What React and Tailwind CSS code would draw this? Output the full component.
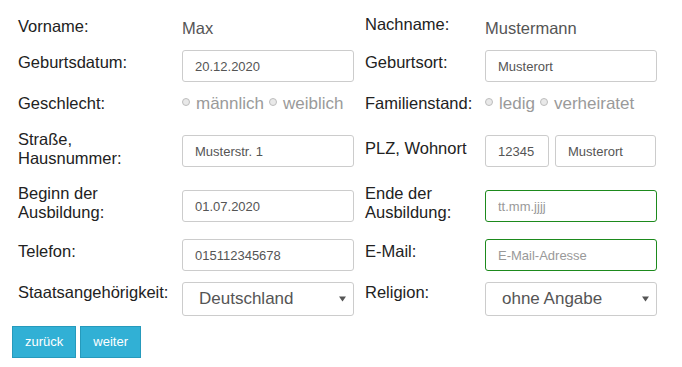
import React from "react";

const LBL = "text-[16.5px] leading-[19px] text-[#222]";
const INP =
  "h-[32px] border rounded-[3px] px-[12px] text-[13px] text-[#555] bg-white outline-none placeholder:text-[#999]";

function Field({ value, placeholder, green, className }) {
  return (
    <input
      readOnly
      value={value || ""}
      placeholder={placeholder}
      className={
        INP +
        " " +
        (green ? "border-[#1d8a1d]" : "border-[#cccccc]") +
        " " +
        (className || "w-[172px]")
      }
    />
  );
}

function Radio({ label, first }) {
  return (
    <span className={"inline-flex items-start " + (first ? "" : "ml-[5px]")}>
      <span className="mt-[4px] mr-[6px] w-[8px] h-[8px] rounded-full border border-[#bdbdbd] bg-[#e9e9e9]" />
      <span className="text-[17px] leading-[19px] text-[#9a9a9a]">{label}</span>
    </span>
  );
}

function Select({ value }) {
  return (
    <div className="w-[172px] h-[34px] border border-[#cccccc] rounded-[3px] bg-white flex items-center justify-between pl-[16px] pr-[7px]">
      <span className="text-[17px] text-[#555]">{value}</span>
      <svg width="7" height="6" viewBox="0 0 7 6">
        <path d="M0 0.5 H7 L3.5 5.5 Z" fill="#555" />
      </svg>
    </div>
  );
}

export default function App() {
  return (
    <div className="w-[682px] h-[367px] bg-white font-['Liberation_Sans',Arial,sans-serif] pt-[15px]">
      <div className="pl-[18px]">
        {/* Row 1 */}
        <div className="grid grid-cols-[164px_183px_120px_172px] items-start h-[35px]">
          <div className={LBL + " mt-[2px]"}>Vorname:</div>
          <div className="mt-[4px] text-[16.5px] leading-[19px] text-[#555]">Max</div>
          <div className={LBL}>Nachname:</div>
          <div className="mt-[4px] text-[16.5px] leading-[19px] text-[#555]">Mustermann</div>
        </div>
        {/* Row 2 */}
        <div className="grid grid-cols-[164px_183px_120px_172px] items-start h-[43px]">
          <div className={LBL + " mt-[3px]"}>Geburtsdatum:</div>
          <Field value="20.12.2020" />
          <div className={LBL + " mt-[3px]"}>Geburtsort:</div>
          <Field value="Musterort" />
        </div>
        {/* Row 3 */}
        <div className="grid grid-cols-[164px_183px_120px_172px] items-start h-[40px]">
          <div className={LBL + " mt-[1px]"}>Geschlecht:</div>
          <div className="mt-[1px] flex items-start">
            <Radio label="männlich" first />
            <Radio label="weiblich" />
          </div>
          <div className={LBL + " mt-[1px]"}>Familienstand:</div>
          <div className="mt-[1px] flex items-start">
            <Radio label="ledig" first />
            <Radio label="verheiratet" />
          </div>
        </div>
        {/* Row 4 */}
        <div className="grid grid-cols-[164px_183px_120px_172px] items-start h-[52px]">
          <div className={LBL + " -mt-[3px]"}>
            Straße,
            <br />
            Hausnummer:
          </div>
          <div className="mt-[2px]">
            <Field value="Musterstr. 1" />
          </div>
          <div className={LBL + " mt-[6px]"}>PLZ, Wohnort</div>
          <div className="mt-[2px] flex gap-[6px]">
            <Field value="12345" className="w-[64px]" />
            <Field value="Musterort" className="w-[101px]" />
          </div>
        </div>
        {/* Row 5 */}
        <div className="grid grid-cols-[164px_183px_120px_172px] items-start h-[54px]">
          <div className={LBL + " -mt-[1px]"}>
            Beginn der
            <br />
            Ausbildung:
          </div>
          <div className="mt-[5px]">
            <Field value="01.07.2020" />
          </div>
          <div className={LBL + " -mt-[1px]"}>
            Ende der
            <br />
            Ausbildung:
          </div>
          <div className="mt-[5px]">
            <Field placeholder="tt.mm.jjjj" green />
          </div>
        </div>
        {/* Row 6 */}
        <div className="grid grid-cols-[164px_183px_120px_172px] items-start h-[43px]">
          <div className={LBL + " mt-[3px]"}>Telefon:</div>
          <Field value="015112345678" />
          <div className={LBL + " mt-[3px]"}>E-Mail:</div>
          <Field placeholder="E-Mail-Adresse" green />
        </div>
        {/* Row 7 */}
        <div className="grid grid-cols-[164px_183px_120px_172px] items-start h-[44px]">
          <div className={LBL + " mt-[1px]"}>Staatsangehörigkeit:</div>
          <Select value="Deutschland" />
          <div className={LBL + " mt-[1px]"}>Religion:</div>
          <Select value="ohne Angabe" />
        </div>
      </div>
      <div className="pl-[12px] flex gap-[4px]">
        <button className="h-[32px] px-[12px] border border-[#269abc] bg-[#31b0d5] text-white text-[13px]">
          zurück
        </button>
        <button className="h-[32px] px-[12px] border border-[#269abc] bg-[#31b0d5] text-white text-[13px]">
          weiter
        </button>
      </div>
    </div>
  );
}
